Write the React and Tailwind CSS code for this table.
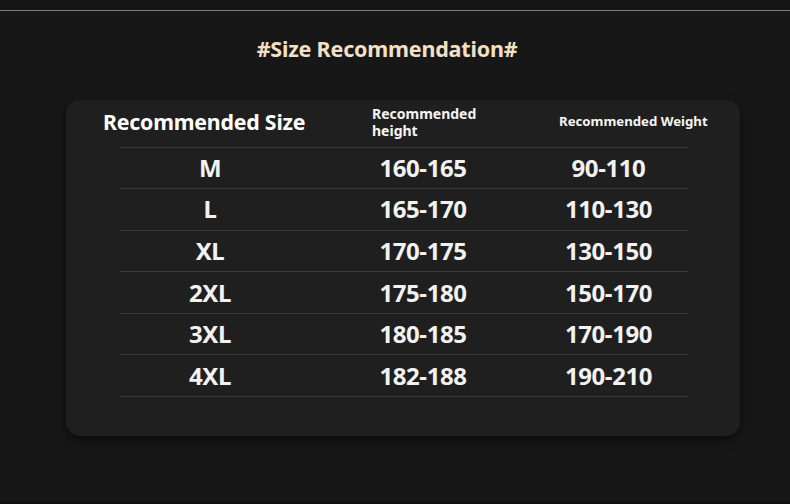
// App.jsx — size recommendation table on dark background
import React from 'react';

const rows = [
  ['M', '160-165', '90-110'],
  ['L', '165-170', '110-130'],
  ['XL', '170-175', '130-150'],
  ['2XL', '175-180', '150-170'],
  ['3XL', '180-185', '170-190'],
  ['4XL', '182-188', '190-210'],
];

export default function App() {
  return (
    <div
      className="w-[790px] h-[504px] bg-[#171717] flex flex-col overflow-hidden"
      style={{ fontFamily: '"Noto Sans", "Open Sans", sans-serif' }}
    >
      {/* top rule */}
      <div className="h-[10px] bg-[#141414]" />
      <div className="h-px bg-[#7c7c7c]" />

      {/* title */}
      <div className="h-[76px] pr-[16px] flex items-center justify-center">
        <h1 className="text-[21.5px] font-bold text-[#f3e0c5] tracking-[-0.2px]">#Size Recommendation#</h1>
      </div>

      {/* card */}
      <div className="mt-[13px] ml-[66px] w-[674px] h-[336px] rounded-[14px] bg-[#1f1f20] shadow-[0_4px_10px_rgba(0,0,0,0.5)]">
        {/* header */}
        <div className="h-[46.5px] pb-[3px] flex items-center text-white font-bold">
          <div className="w-[306px] pl-[37px] text-[21.3px] tracking-[-0.2px]">Recommended Size</div>
          <div className="w-[187px] text-[14px] leading-[17px] text-[#f5f5f5]">
            <div>Recommended</div>
            <div>height</div>
          </div>
          <div className="text-[13.2px] text-[#f5f5f5]">Recommended Weight</div>
        </div>

        {/* rows */}
        <div className="mx-[54px] w-[568px]">
          {rows.map(([size, h, w]) => (
            <div
              key={size}
              className="h-[41.6px] flex items-center border-t border-[#38383a] text-[#f2f2f2] font-bold text-[24px] tracking-[-0.4px]"
            >
              <div className="w-[180px] text-center">{size}</div>
              <div className="w-[246px] text-center">{h}</div>
              <div className="w-[125px] text-center">{w}</div>
            </div>
          ))}
          <div className="border-t border-[#38383a]" />
        </div>
      </div>

      <div className="flex-1" />
      <div className="h-[3px] bg-[#111]" />
    </div>
  );
}
